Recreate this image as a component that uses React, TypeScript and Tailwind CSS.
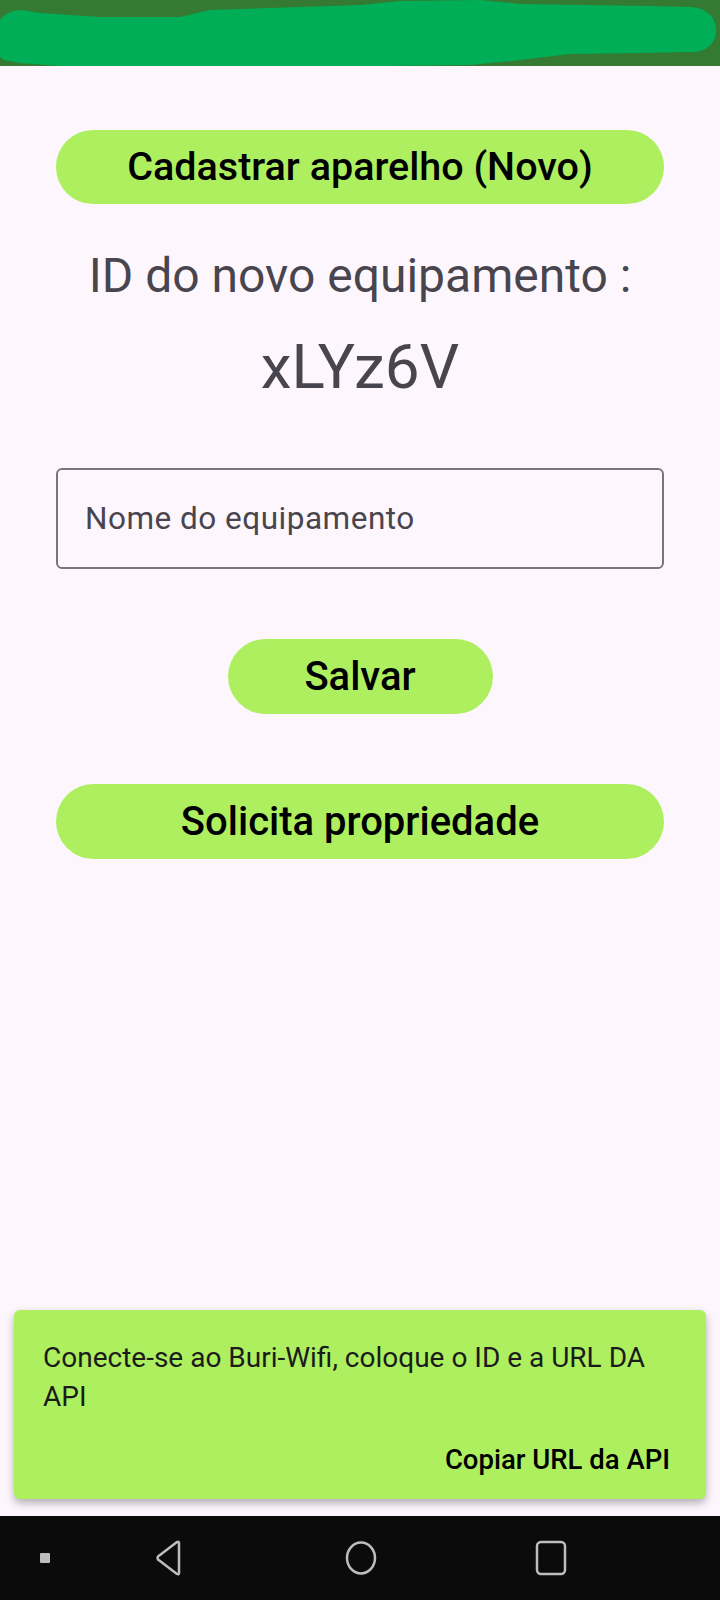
import React from "react";

const font = { fontFamily: "Roboto, 'Noto Sans', sans-serif" };

export default function App() {
  return (
    <div className="flex h-[1600px] w-[720px] flex-col bg-[#fdf7fd]" style={font}>
      {/* status bar (scribbled) */}
      <div className="h-[66px] w-full bg-[#357a32]">
        <svg width="720" height="66" viewBox="0 0 720 66" className="block">
          <path
            d="M0,20 C4,14 12,10 22,10 L40,13 L100,17 L180,17 L210,10 L300,7 L360,5 L400,1 L480,0 L520,4 L650,6 L690,7 C708,8 716,18 716,30 C716,44 706,52 692,52 L640,53 L570,54 L520,60 L470,65 L380,66 L60,66 L20,63 L4,60 C0,58 0,56 0,54 Z"
            fill="#00ae57"
          />
        </svg>
      </div>

      {/* content */}
      <div className="flex flex-1 flex-col items-center px-[56px]">
        <button className="mt-[64px] flex h-[74px] w-full items-center justify-center rounded-full bg-[#adef5f] text-[39.5px] font-medium text-black">
          Cadastrar aparelho (Novo)
        </button>
        <div className="mt-[44px] text-[48px] leading-[56px] text-[#49454f]">ID do novo equipamento :</div>
        <div className="mt-[27px] text-[62px] leading-[72px] text-[#49454f]">xLYz6V</div>
        <div className="mt-[65px] flex h-[101px] w-full items-center rounded-[6px] border-2 border-[#79747e] px-[27px]">
          <span className="text-[31.5px] tracking-[0.5px] text-[#49454f]">Nome do equipamento</span>
        </div>
        <button className="mt-[70px] flex h-[75px] w-[265px] items-center justify-center rounded-full bg-[#adef5f] text-[40px] font-medium text-black">
          Salvar
        </button>
        <button className="mt-[70px] flex h-[75px] w-full items-center justify-center rounded-full bg-[#adef5f] text-[40px] font-medium text-black">
          Solicita propriedade
        </button>
      </div>

      {/* snackbar */}
      <div className="mx-[14px] mb-[17px] flex h-[189px] flex-col rounded-[6px] bg-[#adef5f] pl-[29px] pr-[36px] pt-[28px] shadow-[0_4px_8px_rgba(0,0,0,0.3)]">
        <div className="text-[28px] leading-[39px] text-[#1b1b1b]">
          Conecte-se ao Buri-Wifi, coloque o ID e a URL DA API
        </div>
        <div className="mt-[28px] self-end text-[27.5px] font-medium leading-[32px] text-black">Copiar URL da API</div>
      </div>

      {/* nav bar */}
      <div className="flex h-[84px] w-full items-center bg-[#0b0b0b]">
        <div className="ml-[40px] h-[10px] w-[10px] rounded-[1px] bg-[#bdbdbd]" />
        <svg className="ml-[104px]" width="30" height="36" viewBox="0 0 30 36">
          <path d="M25,3 L25,33 Q25,35 23,34 L4,19.5 Q3,18 4,16.5 L23,2 Q25,1 25,3 Z" fill="none" stroke="#bdbdbd" strokeWidth="2.5" strokeLinejoin="round" />
        </svg>
        <svg className="ml-[160px]" width="34" height="36" viewBox="0 0 34 36">
          <ellipse cx="17" cy="18" rx="14" ry="15.5" fill="none" stroke="#bdbdbd" strokeWidth="2.5" />
        </svg>
        <svg className="ml-[157px]" width="32" height="36" viewBox="0 0 32 36">
          <rect x="2" y="2" width="28" height="32" rx="4" fill="none" stroke="#bdbdbd" strokeWidth="2.5" />
        </svg>
      </div>
    </div>
  );
}
